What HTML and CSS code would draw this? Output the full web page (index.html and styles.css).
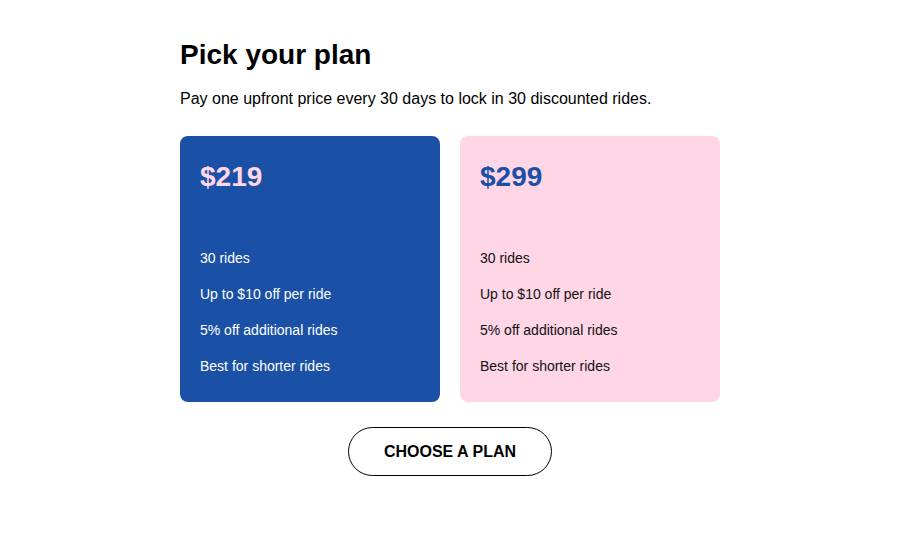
FILE: index.html
```html
<!DOCTYPE html>
<html>
<head>
<meta charset="utf-8">
<link rel="stylesheet" href="styles.css">
</head>
<body>
<main class="page">
  <h1 class="title">Pick your plan</h1>
  <p class="subtitle">Pay one upfront price every 30 days to lock in 30 discounted rides.</p>
  <div class="plans">
    <div class="plan plan-blue">
      <div class="price">$219</div>
      <ul class="features">
        <li>30 rides</li>
        <li>Up to $10 off per ride</li>
        <li>5% off additional rides</li>
        <li>Best for shorter rides</li>
      </ul>
    </div>
    <div class="plan plan-pink">
      <div class="price">$299</div>
      <ul class="features">
        <li>30 rides</li>
        <li>Up to $10 off per ride</li>
        <li>5% off additional rides</li>
        <li>Best for shorter rides</li>
      </ul>
    </div>
  </div>
  <div class="actions">
    <button class="choose">CHOOSE A PLAN</button>
  </div>
</main>
</body>
</html>
```
FILE: styles.css
```css
html, body {
  margin: 0;
  padding: 0;
  background: #ffffff;
}
body {
  font-family: "Liberation Sans", Arial, sans-serif;
  color: #000000;
}
.page {
  width: 540px;
  margin: 0 auto;
  padding-top: 39px;
}
.title {
  margin: 0;
  font-size: 28px;
  line-height: 32px;
  font-weight: 700;
}
.subtitle {
  margin: 19px 0 0;
  font-size: 16px;
  line-height: 18px;
}
.plans {
  display: flex;
  gap: 20px;
  margin-top: 28px;
}
.plan {
  flex: 1;
  border-radius: 8px;
  padding: 24px 20px 18px;
}
.plan-blue {
  background: #1a51a6;
  color: #ffffff;
}
.plan-pink {
  background: #ffd6e6;
  color: #111111;
}
.price {
  font-size: 28px;
  line-height: 34px;
  font-weight: 700;
}
.plan-blue .price { color: #ffd6e6; }
.plan-pink .price { color: #1a51a6; }
.features {
  list-style: none;
  margin: 46px 0 0;
  padding: 0;
  font-size: 14px;
  line-height: 36px;
}
.actions {
  display: flex;
  justify-content: center;
  margin-top: 25px;
}
.choose {
  font-family: "Liberation Sans", Arial, sans-serif;
  font-size: 16px;
  font-weight: 700;
  line-height: 19px;
  color: #000000;
  background: #ffffff;
  border: 1px solid #000000;
  border-radius: 25px;
  padding: 14px 35px;
}
```
